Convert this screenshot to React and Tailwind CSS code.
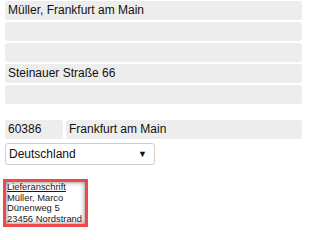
import React from "react";

const field =
  "h-[19px] w-full rounded-[3px] bg-[#ededed] px-[3px] text-[12px] leading-[19px] text-[#111] outline-none";

export default function App() {
  return (
    <div className="h-[228px] w-[304px] overflow-hidden bg-white pl-[5px] pr-[2px] pt-[1px] font-['Liberation_Sans',Arial,sans-serif]">
      {/* address lines */}
      <div className="flex flex-col gap-[2px]">
        <input className={field} defaultValue="Müller, Frankfurt am Main" readOnly />
        <input className={field} defaultValue="" readOnly />
        <input className={field} defaultValue="" readOnly />
        <input className={field} defaultValue="Steinauer Straße 66" readOnly />
        <input className={field} defaultValue="" readOnly />
      </div>

      {/* zip + city */}
      <div className="mt-[16px] flex gap-[3px]">
        <input className={`${field} !w-[58px] shrink-0`} defaultValue="60386" readOnly />
        <input className={field} defaultValue="Frankfurt am Main" readOnly />
      </div>

      {/* country */}
      <div className="mt-[4px] flex h-[22px] w-[150px] items-center justify-between rounded-[3px] border border-[#cfcfcf] bg-white pl-[3px] pr-[7px] text-[12px] text-[#111]">
        <span>Deutschland</span>
        <span className="text-[9px] leading-none">▼</span>
      </div>

      {/* delivery address preview */}
      <div className="-ml-[2px] mt-[14px] w-[85px] border-[3px] border-[#f04848] px-[1px] text-[9.4px] leading-[10.5px] text-[#1a1a1a] shadow-[inset_0_0_5px_#7a7a7a]">
        <div className="underline">Lieferanschrift</div>
        <div>Müller, Marco</div>
        <div>Dünenweg 5</div>
        <div className="whitespace-nowrap">23456 Nordstrand</div>
      </div>
    </div>
  );
}
